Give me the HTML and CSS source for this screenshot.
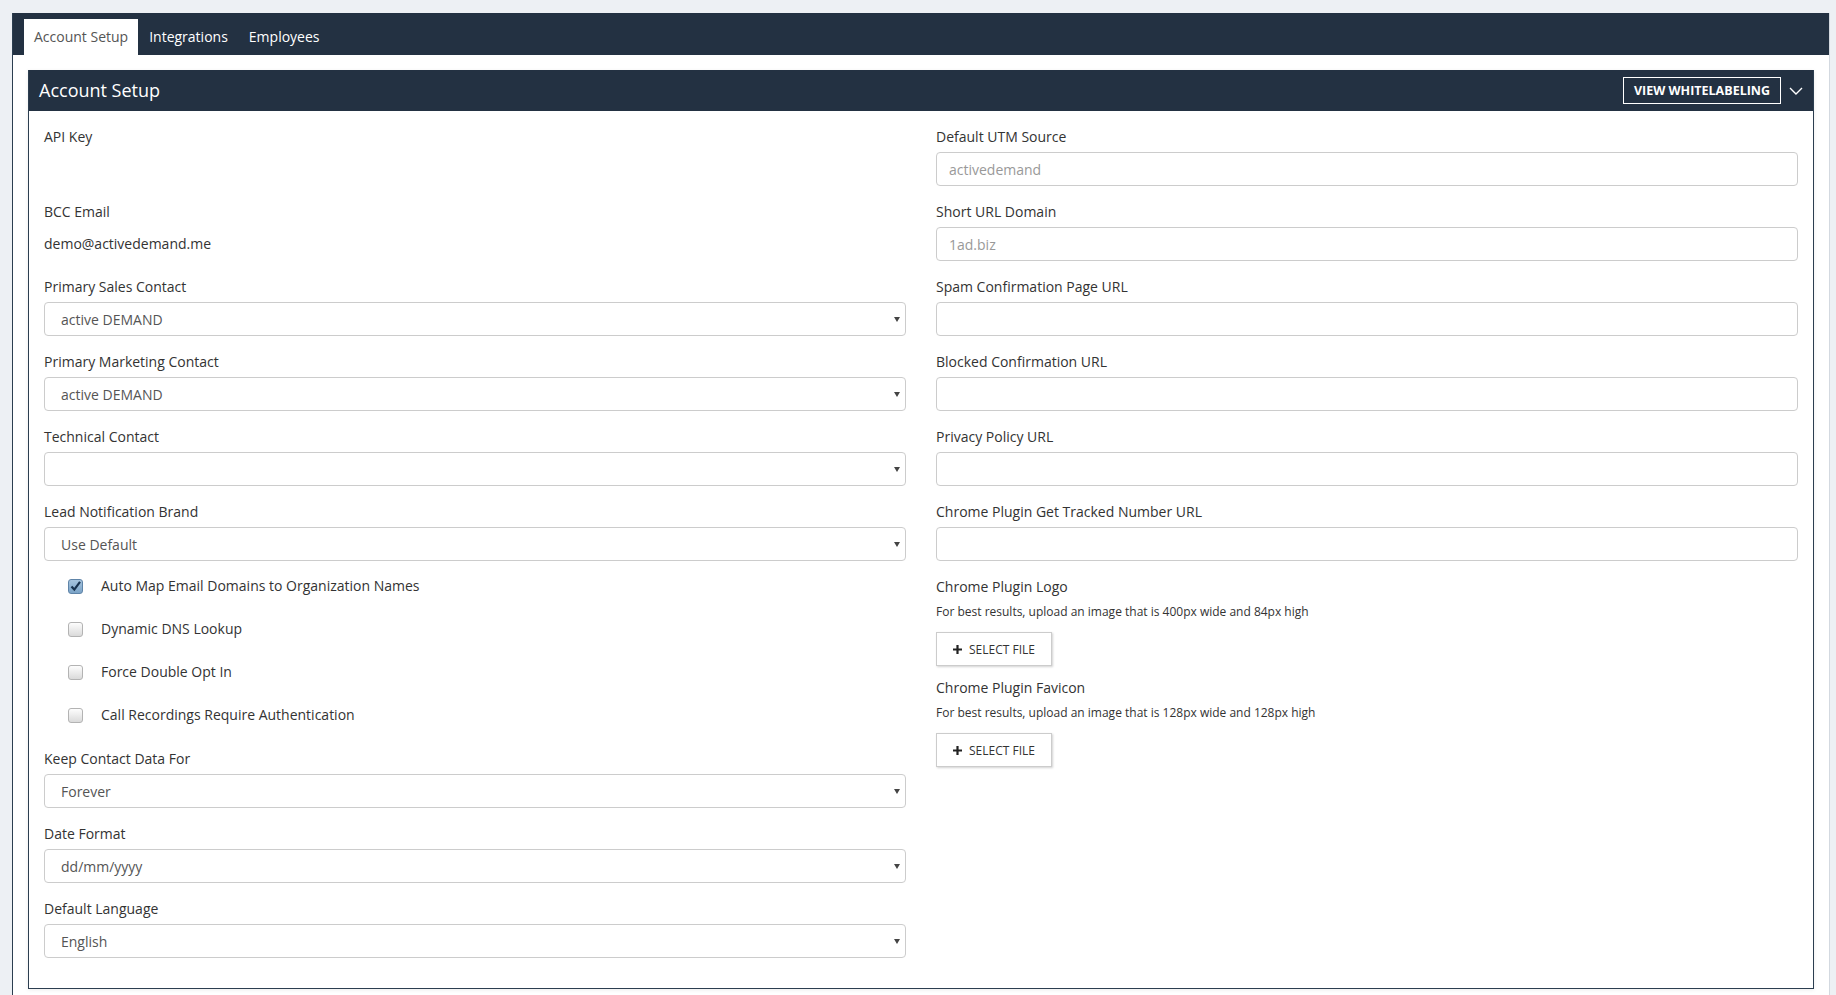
FILE: index.html
```html
<!DOCTYPE html>
<html lang="en">
<head>
    <meta charset="UTF-8">
    <meta name="viewport" content="width=device-width, initial-scale=1.0">
    <title>Account Setup</title>
    <link rel="stylesheet" href="styles.css">
</head>
<body>
    <div class="page">
        <!-- top tabs -->
        <div class="tabs-bar">
            <a class="tab active">Account Setup</a>
            <a class="tab">Integrations</a>
            <a class="tab">Employees</a>
        </div>

        <div class="tab-content">
            <div class="panel">
                <div class="panel-heading">
                    <h3 class="panel-title">Account Setup</h3>
                    <div class="panel-tools">
                        <button class="btn-outline">VIEW WHITELABELING</button>
                        <svg class="chevron" width="14" height="8" viewBox="0 0 14 8"><path d="M1 1 L7 7 L13 1" fill="none" stroke="#fff" stroke-width="1.4"/></svg>
                    </div>
                </div>

                <div class="panel-body">
                    <div class="col">
                        <div class="form-group">
                            <label>API Key</label>
                            <div class="static-value"></div>
                        </div>
                        <div class="form-group">
                            <label>BCC Email</label>
                            <div class="static-value">demo@activedemand.me</div>
                        </div>
                        <div class="form-group">
                            <label>Primary Sales Contact</label>
                            <div class="select-wrap"><select class="form-control select"><option>active DEMAND</option></select></div>
                        </div>
                        <div class="form-group">
                            <label>Primary Marketing Contact</label>
                            <div class="select-wrap"><select class="form-control select"><option>active DEMAND</option></select></div>
                        </div>
                        <div class="form-group">
                            <label>Technical Contact</label>
                            <div class="select-wrap"><select class="form-control select"><option></option></select></div>
                        </div>
                        <div class="form-group">
                            <label>Lead Notification Brand</label>
                            <div class="select-wrap"><select class="form-control select"><option>Use Default</option></select></div>
                        </div>

                        <div class="check-list">
                            <label class="check">
                                <span class="box checked"><svg width="13" height="13" viewBox="0 0 13 13"><path d="M2.5 6.5 L5.3 9.6 L11 1.8" fill="none" stroke="#18324f" stroke-width="2.2"/></svg></span>
                                Auto Map Email Domains to Organization Names
                            </label>
                            <label class="check"><span class="box"></span>Dynamic DNS Lookup</label>
                            <label class="check"><span class="box"></span>Force Double Opt In</label>
                            <label class="check"><span class="box"></span>Call Recordings Require Authentication</label>
                        </div>

                        <div class="form-group">
                            <label>Keep Contact Data For</label>
                            <div class="select-wrap"><select class="form-control select"><option>Forever</option></select></div>
                        </div>
                        <div class="form-group">
                            <label>Date Format</label>
                            <div class="select-wrap"><select class="form-control select"><option>dd/mm/yyyy</option></select></div>
                        </div>
                        <div class="form-group">
                            <label>Default Language</label>
                            <div class="select-wrap"><select class="form-control select"><option>English</option></select></div>
                        </div>
                    </div>

                    <div class="col">
                        <div class="form-group">
                            <label>Default UTM Source</label>
                            <input type="text" class="form-control" placeholder="activedemand">
                        </div>
                        <div class="form-group">
                            <label>Short URL Domain</label>
                            <input type="text" class="form-control" placeholder="1ad.biz">
                        </div>
                        <div class="form-group">
                            <label>Spam Confirmation Page URL</label>
                            <input type="text" class="form-control">
                        </div>
                        <div class="form-group">
                            <label>Blocked Confirmation URL</label>
                            <input type="text" class="form-control">
                        </div>
                        <div class="form-group">
                            <label>Privacy Policy URL</label>
                            <input type="text" class="form-control">
                        </div>
                        <div class="form-group">
                            <label>Chrome Plugin Get Tracked Number URL</label>
                            <input type="text" class="form-control">
                        </div>
                        <div class="upload-group">
                            <label>Chrome Plugin Logo</label>
                            <p class="help">For best results, upload an image that is 400px wide and 84px high</p>
                            <button class="btn-file"><svg width="9" height="9" viewBox="0 0 9 9"><path d="M4.5 0 V9 M0 4.5 H9" stroke="#222" stroke-width="2.2"/></svg>SELECT FILE</button>
                        </div>
                        <div class="upload-group">
                            <label>Chrome Plugin Favicon</label>
                            <p class="help">For best results, upload an image that is 128px wide and 128px high</p>
                            <button class="btn-file"><svg width="9" height="9" viewBox="0 0 9 9"><path d="M4.5 0 V9 M0 4.5 H9" stroke="#222" stroke-width="2.2"/></svg>SELECT FILE</button>
                        </div>
                    </div>
                </div>
            </div>
        </div>
    </div>
</body>
</html>
```

FILE: styles.css
```css
* { box-sizing: border-box; }
body { margin: 0; background: #edf0f4; font-family: 'Open Sans', 'Liberation Sans', Arial, sans-serif; font-size: 14px; line-height: 20px; color: #333; }

.page { margin: 13px 6px 0 12px; background: #fff; border-left: 1px solid #2c3e50; border-right: 1px solid #d3d9e0; min-height: 990px; }

/* tabs */
.tabs-bar { background: #233142; height: 42px; padding: 6px 0 0 11px; display: flex; gap: 1px; }
.tab { display: block; height: 36px; line-height: 36px; padding: 0 10px; color: #fff; font-size: 14px; cursor: pointer; }
.tab.active { background: #fff; color: #555; }

.tab-content { padding: 15px 15px 0; }

/* panel */
.panel { border: 1px solid #2c3e50; border-top: none; box-shadow: 0 1px 4px rgba(0,0,0,0.08); }
.panel-heading { background: #233142; height: 41px; display: flex; align-items: center; justify-content: space-between; padding: 0 10px; }
.panel-title { margin: 0 0 2px; font-size: 18px; font-weight: 400; color: #fff; }
.panel-tools { display: flex; align-items: center; gap: 8px; }
.btn-outline { background: transparent; border: 1px solid #fff; color: #fff; font-family: inherit; font-size: 12.5px; font-weight: 700; height: 27px; padding: 0 6px; width: 158px; cursor: pointer; }
.chevron { display: block; }

.panel-body { display: grid; grid-template-columns: 1fr 1fr; column-gap: 30px; padding: 16px 15px 14px; }

/* form */
.form-group { margin-bottom: 16px; }
label { display: block; margin-bottom: 5px; font-weight: 400; color: #333; }
.static-value { min-height: 34px; padding: 7px 0; color: #333; }
.form-control { display: block; width: 100%; height: 34px; padding: 6px 12px; border: 1px solid #ccc; border-radius: 4px; background: #fff; font-family: inherit; font-size: 14px; color: #555; outline: none; }
.form-control::placeholder { color: #999; }
.select-wrap { position: relative; }
.select { appearance: none; -webkit-appearance: none; padding-left: 16px; }
.select-wrap::after { content: ""; position: absolute; right: 6px; top: 15px; border-left: 3px solid transparent; border-right: 3px solid transparent; border-top: 5px solid #444; }

/* checkboxes */
.check-list { display: flex; flex-direction: column; gap: 23px; margin: -1px 0 24px; padding-left: 24px; }
.check { display: flex; align-items: center; height: 20px; margin: 0; color: #333; }
.box { width: 15px; height: 15px; margin-right: 18px; border: 1px solid #b3b3b3; border-radius: 3px; background: linear-gradient(#fdfdfd, #dadada); display: flex; align-items: center; justify-content: center; }
.box.checked { background: linear-gradient(#a6c4de, #7ba3c7); border-color: #5f84a8; }

/* uploads */
.upload-group { margin-bottom: 12px; }
.help { margin: 0 0 10px; font-size: 12px; line-height: 20px; color: #333; }
.btn-file { display: flex; align-items: center; gap: 7px; width: 116px; height: 34px; padding: 0 0 0 16px; background: #fff; border: 1px solid #ccc; box-shadow: 1px 1px 2px rgba(0,0,0,0.18); font-family: inherit; font-size: 12px; color: #333; cursor: pointer; }
```
